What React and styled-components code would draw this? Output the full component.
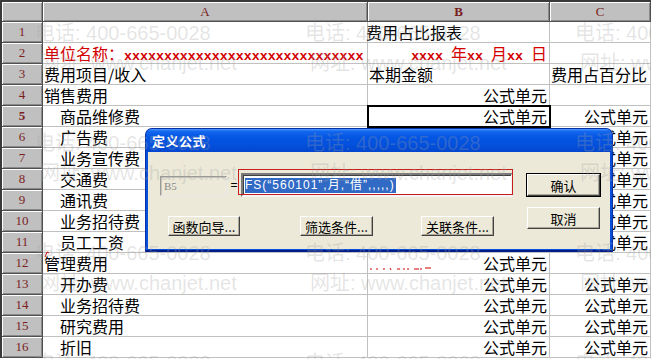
import React from "react";
import styled, { createGlobalStyle, css } from "styled-components";

const GlobalStyle = createGlobalStyle`
  html, body {
    margin: 0;
    padding: 0;
    background: #fff;
  }
`;

const FORMULA = "公式单元";

const rows = [
  { n: 1, b: "费用占比报表", bAlign: "left" },
  { n: 2, unit: true },
  { n: 3, a: "费用项目/收入", b: "本期金额", bAlign: "left", c: "费用占百分比", cAlign: "left" },
  { n: 4, a: "销售费用", b: FORMULA },
  { n: 5, a: "商品维修费", sub: true, b: FORMULA, c: FORMULA, active: true },
  { n: 6, a: "广告费", sub: true, b: FORMULA, c: FORMULA },
  { n: 7, a: "业务宣传费", sub: true, b: FORMULA, c: FORMULA },
  { n: 8, a: "交通费", sub: true, b: FORMULA, c: FORMULA },
  { n: 9, a: "通讯费", sub: true, b: FORMULA, c: FORMULA },
  { n: 10, a: "业务招待费", sub: true, b: FORMULA, c: FORMULA },
  { n: 11, a: "员工工资", sub: true, b: FORMULA, c: FORMULA },
  { n: 12, a: "管理费用", b: FORMULA, mark: true },
  { n: 13, a: "开办费", sub: true, b: FORMULA, c: FORMULA },
  { n: 14, a: "业务招待费", sub: true, b: FORMULA, c: FORMULA },
  { n: 15, a: "研究费用", sub: true, b: FORMULA, c: FORMULA },
  { n: 16, a: "折旧", sub: true, b: FORMULA, c: FORMULA },
];

// watermark lines repeat every 110px down and 270px across
const marks = [];
[0, 1, 2, 3].forEach((i) => {
  [0, 1, 2].forEach((j) => {
    marks.push({ x: 35 + j * 270, y: 17 + i * 110, text: "电话: 400-665-0028" });
    if (i < 3) marks.push({ x: 40 + j * 270, y: 47 + i * 110, text: "网址: www.chanjet.net" });
  });
});

function App() {
  return (
    <>
      <GlobalStyle />
      <Screen>
        <Sheet>
          <Corner />
          <ColHeader>A</ColHeader>
          <ColHeader $active>B</ColHeader>
          <ColHeader>C</ColHeader>

          {rows.map((r) => (
            <React.Fragment key={r.n}>
              <RowHeader $active={r.active}>{r.n}</RowHeader>
              {r.unit ? (
                <>
                  <Cell $red>
                    单位名称：<Xs>xxxxxxxxxxxxxxxxxxxxxxxxxxxxxx</Xs>
                  </Cell>
                  <Cell $red $align="right">
                    <Xs>xxxx </Xs>年<Xs>xx </Xs>月<Xs>xx </Xs>日
                  </Cell>
                  <Cell />
                </>
              ) : (
                <>
                  <Cell $sub={r.sub}>
                    {r.mark && (
                      <CommentMark width="6" height="7" viewBox="0 0 6 7">
                        <path d="M1 6 L3 1 L5 2" stroke="#d00000" strokeWidth="1" fill="none" />
                      </CommentMark>
                    )}
                    {r.a}
                  </Cell>
                  <Cell $align={r.bAlign || "right"} $selected={r.active} $flush={r.n === 1}>
                    {r.mark && (
                      <RedTrace width="64" height="4" viewBox="0 0 64 4">
                        <path
                          d="M1 1v2M7 1v2M13 2h2M20 1l1 2M27 2h3M34 1v2M38 1v2M44 2h5M51 1v2M55 1h6"
                          stroke="#d00000"
                          strokeWidth="1"
                          fill="none"
                        />
                      </RedTrace>
                    )}
                    {r.b}
                  </Cell>
                  <Cell $align={r.cAlign || "right"}>{r.c}</Cell>
                </>
              )}
            </React.Fragment>
          ))}
        </Sheet>

        <Dialog>
          <TitleBar>定义公式</TitleBar>
          <DialogBody>
            <FormArea>
              <FieldRow>
                <CellRef>B5</CellRef>
                <Equals>=</Equals>
                <FormulaBox>
                  <Selection>FS(“560101”,月,“借”,,,,,)</Selection>
                  <RedFrame />
                </FormulaBox>
              </FieldRow>
              <ButtonRow>
                <Button $ml={8} $w={72}>函数向导...</Button>
                <Button $ml={60} $w={73}>筛选条件...</Button>
                <Button $ml={48} $w={73}>关联条件...</Button>
              </ButtonRow>
            </FormArea>
            <ActionColumn>
              <Button $w={73} $h={22} $default>确认</Button>
              <Button $w={73} $h={22}>取消</Button>
            </ActionColumn>
          </DialogBody>
        </Dialog>

        <Watermark>
          {marks.map((m, i) => (
            <WmText key={i} style={{ left: m.x, top: m.y }}>
              {m.text}
            </WmText>
          ))}
        </Watermark>
      </Screen>
    </>
  );
}

export default App;

const Screen = styled.div`
  position: relative;
  width: 651px;
  height: 359px;
  overflow: hidden;
  background: #fff;
`;

const Sheet = styled.div`
  display: grid;
  grid-template-columns: 41px 325px 182px 101px;
  grid-template-rows: 20px;
  grid-auto-rows: 21px;
  border-top: 2px solid #3a3a3a;
  border-left: 2px solid #3a3a3a;
  font-family: "Noto Sans CJK SC", sans-serif;
`;

const headerBase = css`
  background: #c0c0c0;
  box-sizing: border-box;
  border-right: 1px solid #505050;
  border-bottom: 1px solid #505050;
  box-shadow: inset 1px 1px 0 #fff, inset -1px -1px 0 #8a8a8a;
  display: flex;
  align-items: center;
  justify-content: center;
  font-family: "Liberation Serif", serif;
  font-size: 13px;
  color: #7a1f1f;
`;

const Corner = styled.div`
  ${headerBase}
`;

const ColHeader = styled.div`
  ${headerBase}
  font-weight: ${(p) => (p.$active ? 700 : 400)};
  padding-top: 1px;
`;

const RowHeader = styled.div`
  ${headerBase}
  font-weight: ${(p) => (p.$active ? 700 : 400)};
`;

const Cell = styled.div`
  position: relative;
  box-sizing: border-box;
  border-right: 1px solid #c0c0c0;
  border-bottom: 1px solid #c0c0c0;
  font-size: 16px;
  line-height: 20px;
  white-space: nowrap;
  color: ${(p) => (p.$red ? "#d40000" : "#000")};
  text-align: ${(p) => p.$align || "left"};
  padding: 0 ${(p) => (p.$align === "right" ? "2px" : "0")} 0
    ${(p) => (p.$sub ? "17px" : p.$flush ? "0" : "1px")};
  margin-left: ${(p) => (p.$flush ? "-2px" : "0")};
  ${(p) =>
    p.$selected &&
    css`
      outline: 2px solid #000;
      outline-offset: -1px;
      z-index: 1;
    `}
`;

const Xs = styled.span`
  font-family: "Liberation Mono", monospace;
  font-size: 13.3px;
  font-weight: 700;
`;

const CommentMark = styled.svg`
  position: absolute;
  left: 1px;
  top: -2px;
`;

const RedTrace = styled.svg`
  position: absolute;
  left: 2px;
  top: 14px;
`;

const Dialog = styled.div`
  position: absolute;
  left: 145px;
  top: 128px;
  width: 468px;
  height: 124px;
  box-sizing: border-box;
  display: flex;
  flex-direction: column;
  background: #0a4fd8;
  border-radius: 7px 7px 0 0;
  border: 1px solid #0831a8;
  border-bottom: 2px solid #001d8a;
  z-index: 5;
`;

const TitleBar = styled.div`
  height: 23px;
  flex: none;
  display: flex;
  align-items: center;
  padding-left: 6px;
  border-radius: 6px 6px 0 0;
  background: linear-gradient(
    180deg,
    #4a98ff 0%,
    #1467ee 10%,
    #0456e4 35%,
    #0350dc 70%,
    #0346cf 100%
  );
  color: #fff;
  font-family: "Noto Sans CJK SC", sans-serif;
  font-size: 13px;
  font-weight: 700;
  letter-spacing: 0.5px;
`;

const DialogBody = styled.div`
  flex: 1;
  display: flex;
  margin: 0 2px 1px;
  background: #ece9d8;
  font-family: "Noto Sans CJK SC", sans-serif;
`;

const FormArea = styled.div`
  display: flex;
  flex-direction: column;
  padding: 21px 0 0 12px;
`;

const FieldRow = styled.div`
  display: flex;
  align-items: flex-end;
  height: 24px;
`;

const CellRef = styled.div`
  width: 67px;
  height: 20px;
  box-sizing: border-box;
  margin-bottom: 1px;
  border: 1px solid;
  border-color: #9a9a9a #e8e8e8 #e8e8e8 #9a9a9a;
  box-shadow: inset 1px 1px 0 #c8c5b8;
  padding: 2px 0 0 3px;
  font-family: "Liberation Serif", serif;
  font-size: 11px;
  line-height: 14px;
  color: #8a8a8a;
`;

const Equals = styled.div`
  width: 14px;
  align-self: center;
  text-align: center;
  font-family: "Liberation Sans", sans-serif;
  font-size: 12px;
  color: #000;
`;

const FormulaBox = styled.div`
  position: relative;
  width: 272px;
  height: 24px;
  box-sizing: border-box;
  display: flex;
  align-items: center;
  background: #fff;
  border: 2px solid;
  border-color: #7a7a7a #f4f4f4 #f4f4f4 #7a7a7a;
  box-shadow: inset 1px 1px 0 #404040;
  padding: 0 0 0 2px;
`;

const Selection = styled.span`
  display: block;
  background: #316ac5;
  color: #fff;
  font-family: "Liberation Sans", "Noto Sans CJK SC", sans-serif;
  font-size: 12px;
  line-height: 15px;
  letter-spacing: 1px;
  padding-right: 1px;
`;

const RedFrame = styled.div`
  position: absolute;
  left: -5px;
  top: -6px;
  width: 275px;
  height: 26px;
  box-sizing: border-box;
  border: 1px solid #c81c1c;
`;

const ButtonRow = styled.div`
  display: flex;
  margin-top: 19px;
`;

const ActionColumn = styled.div`
  margin-left: auto;
  display: flex;
  flex-direction: column;
  gap: 11px;
  padding: 22px 10px 0 0;
`;

const Button = styled.div`
  width: ${(p) => p.$w}px;
  height: ${(p) => p.$h || 20}px;
  margin-left: ${(p) => p.$ml || 0}px;
  box-sizing: border-box;
  display: flex;
  align-items: center;
  justify-content: center;
  background: #ece9d8;
  border: 1px solid;
  border-color: #fff #404040 #404040 #fff;
  box-shadow: inset -1px -1px 0 #aca899;
  font-size: 13px;
  color: #000;
  white-space: nowrap;
  ${(p) =>
    p.$default &&
    css`
      outline: 1px solid #000;
    `}
`;

const Watermark = styled.div`
  position: absolute;
  inset: 0;
  pointer-events: none;
  z-index: 10;
`;

const WmText = styled.div`
  position: absolute;
  white-space: nowrap;
  font-family: "Liberation Sans", "Noto Sans CJK SC", sans-serif;
  font-size: 20px;
  color: rgba(160, 160, 160, 0.28);
`;
